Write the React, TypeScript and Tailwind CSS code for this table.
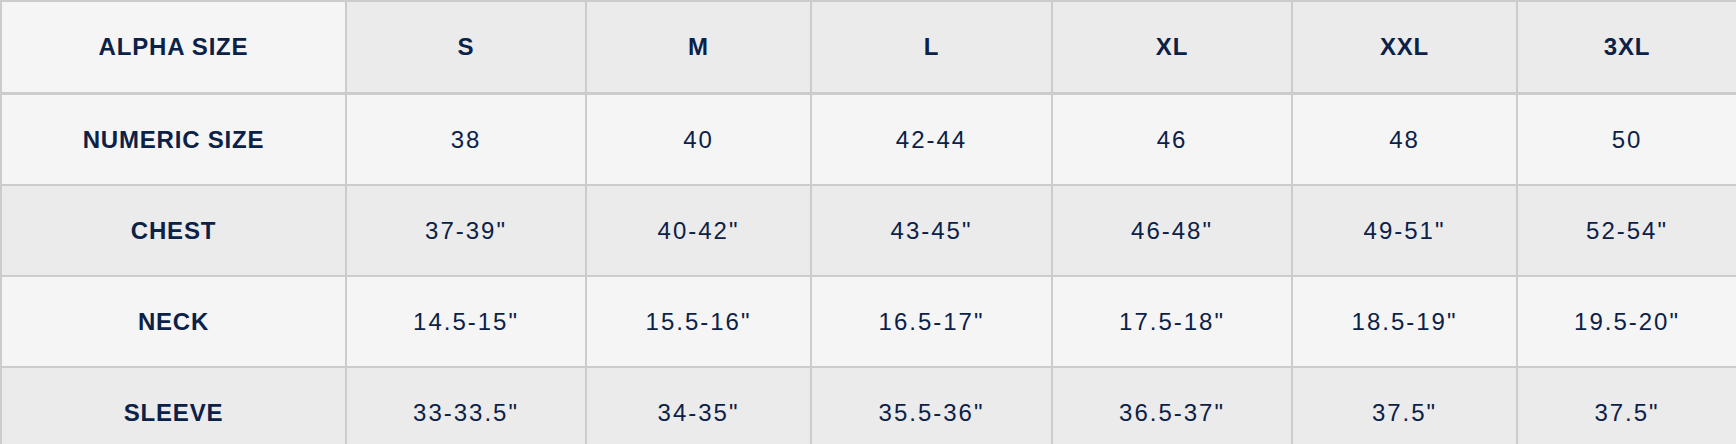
const sizes = ["S", "M", "L", "XL", "XXL", "3XL"];

const rows: { label: string; values: string[] }[] = [
  { label: "NUMERIC SIZE", values: ["38", "40", "42-44", "46", "48", "50"] },
  { label: "CHEST", values: ['37-39"', '40-42"', '43-45"', '46-48"', '49-51"', '52-54"'] },
  { label: "NECK", values: ['14.5-15"', '15.5-16"', '16.5-17"', '17.5-18"', '18.5-19"', '19.5-20"'] },
  { label: "SLEEVE", values: ['33-33.5"', '34-35"', '35.5-36"', '36.5-37"', '37.5"', '37.5"'] },
];

const cols = "grid grid-cols-[343px_238px_223px_239px_238px_223px_1fr] gap-x-[2px]";

export default function App() {
  return (
    <div
      className="flex h-[444px] w-[1736px] flex-col overflow-hidden bg-[#cccccc] pl-[2px] pt-[2px] text-[#0c2147]"
      style={{ fontFamily: '"Liberation Sans", Arial, sans-serif' }}
    >
      <div className={`${cols} mb-[3px] h-[90px] shrink-0`}>
        <div className="flex items-center justify-center bg-[#f5f5f5] text-[24px] font-bold tracking-[0.8px]">
          ALPHA SIZE
        </div>
        {sizes.map((s) => (
          <div
            key={s}
            className="flex items-center justify-center bg-[#ebebeb] text-[24px] font-bold tracking-[0.8px]"
          >
            {s}
          </div>
        ))}
      </div>
      <div className="flex flex-col gap-[2px]">
        {rows.map((row, i) => {
          const bg = i % 2 === 0 ? "bg-[#f5f5f5]" : "bg-[#ebebeb]";
          return (
            <div key={row.label} className={`${cols} h-[89px] shrink-0`}>
              <div
                className={`flex items-center justify-center text-[24px] font-bold tracking-[0.8px] ${bg}`}
              >
                {row.label}
              </div>
              {row.values.map((v, j) => (
                <div
                  key={j}
                  className={`flex items-center justify-center text-[24px] tracking-[2px] ${bg}`}
                >
                  {v}
                </div>
              ))}
            </div>
          );
        })}
      </div>
    </div>
  );
}
